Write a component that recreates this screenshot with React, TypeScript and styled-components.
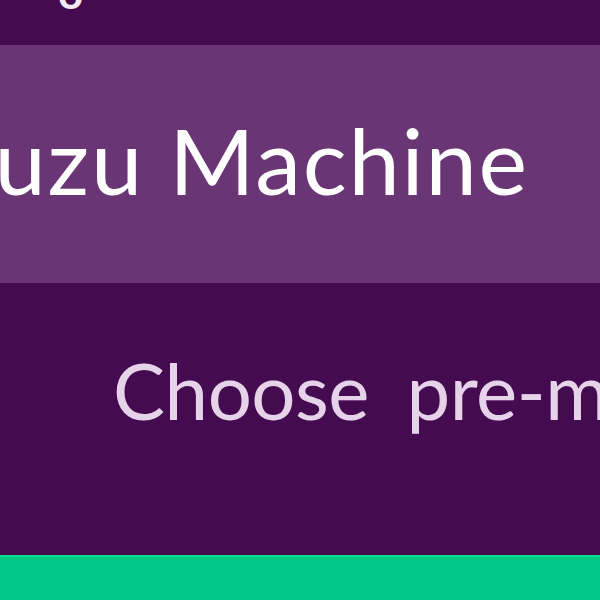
import styled, { createGlobalStyle } from "styled-components";

const GlobalStyle = createGlobalStyle`
  html, body {
    margin: 0;
    padding: 0;
    background: #450b51;
    overflow: hidden;
  }
  body {
    font-family: Lato, "Noto Sans", sans-serif;
  }
`;

const Page = styled.div`
  width: 600px;
  height: 600px;
  display: flex;
  flex-direction: column;
  overflow: hidden;
`;

const TopBar = styled.div`
  height: 45px;
  flex: none;
  display: flex;
  align-items: flex-start;
  overflow: hidden;
`;

const Crumb = styled.span`
  display: block;
  padding-left: 58px;
  margin-top: -30px;
  font-size: 44px;
  font-weight: 700;
  line-height: 44px;
  color: #f4eaf6;
`;

const Banner = styled.header`
  height: 238px;
  flex: none;
  background: #693574;
  display: flex;
  align-items: center;
  overflow: hidden;
`;

const Title = styled.h1`
  margin: -8px 0 0 -66px;
  font-size: 92px;
  font-weight: 400;
  letter-spacing: 1.8px;
  line-height: 1;
  color: #ffffff;
  white-space: nowrap;
`;

const Body = styled.main`
  flex: 1;
  display: flex;
  align-items: flex-start;
  padding: 68px 0 0 113px;
  overflow: hidden;
`;

const Lead = styled.p`
  margin: 0;
  font-size: 78px;
  letter-spacing: -0.5px;
  word-spacing: 18px;
  line-height: 1;
  color: #e6d3ea;
  white-space: nowrap;
`;

const Footer = styled.footer`
  box-sizing: border-box;
  height: 45px;
  flex: none;
  background: #00c785;
  border-top: 2px solid #06de8d;
`;

export default function App() {
  return (
    <>
      <GlobalStyle />
      <Page>
        <TopBar>
          <Crumb>o</Crumb>
        </TopBar>
        <Banner>
          <Title>Kuzu Machine</Title>
        </Banner>
        <Body>
          <Lead>Choose pre-made flavours</Lead>
        </Body>
        <Footer />
      </Page>
    </>
  );
}
